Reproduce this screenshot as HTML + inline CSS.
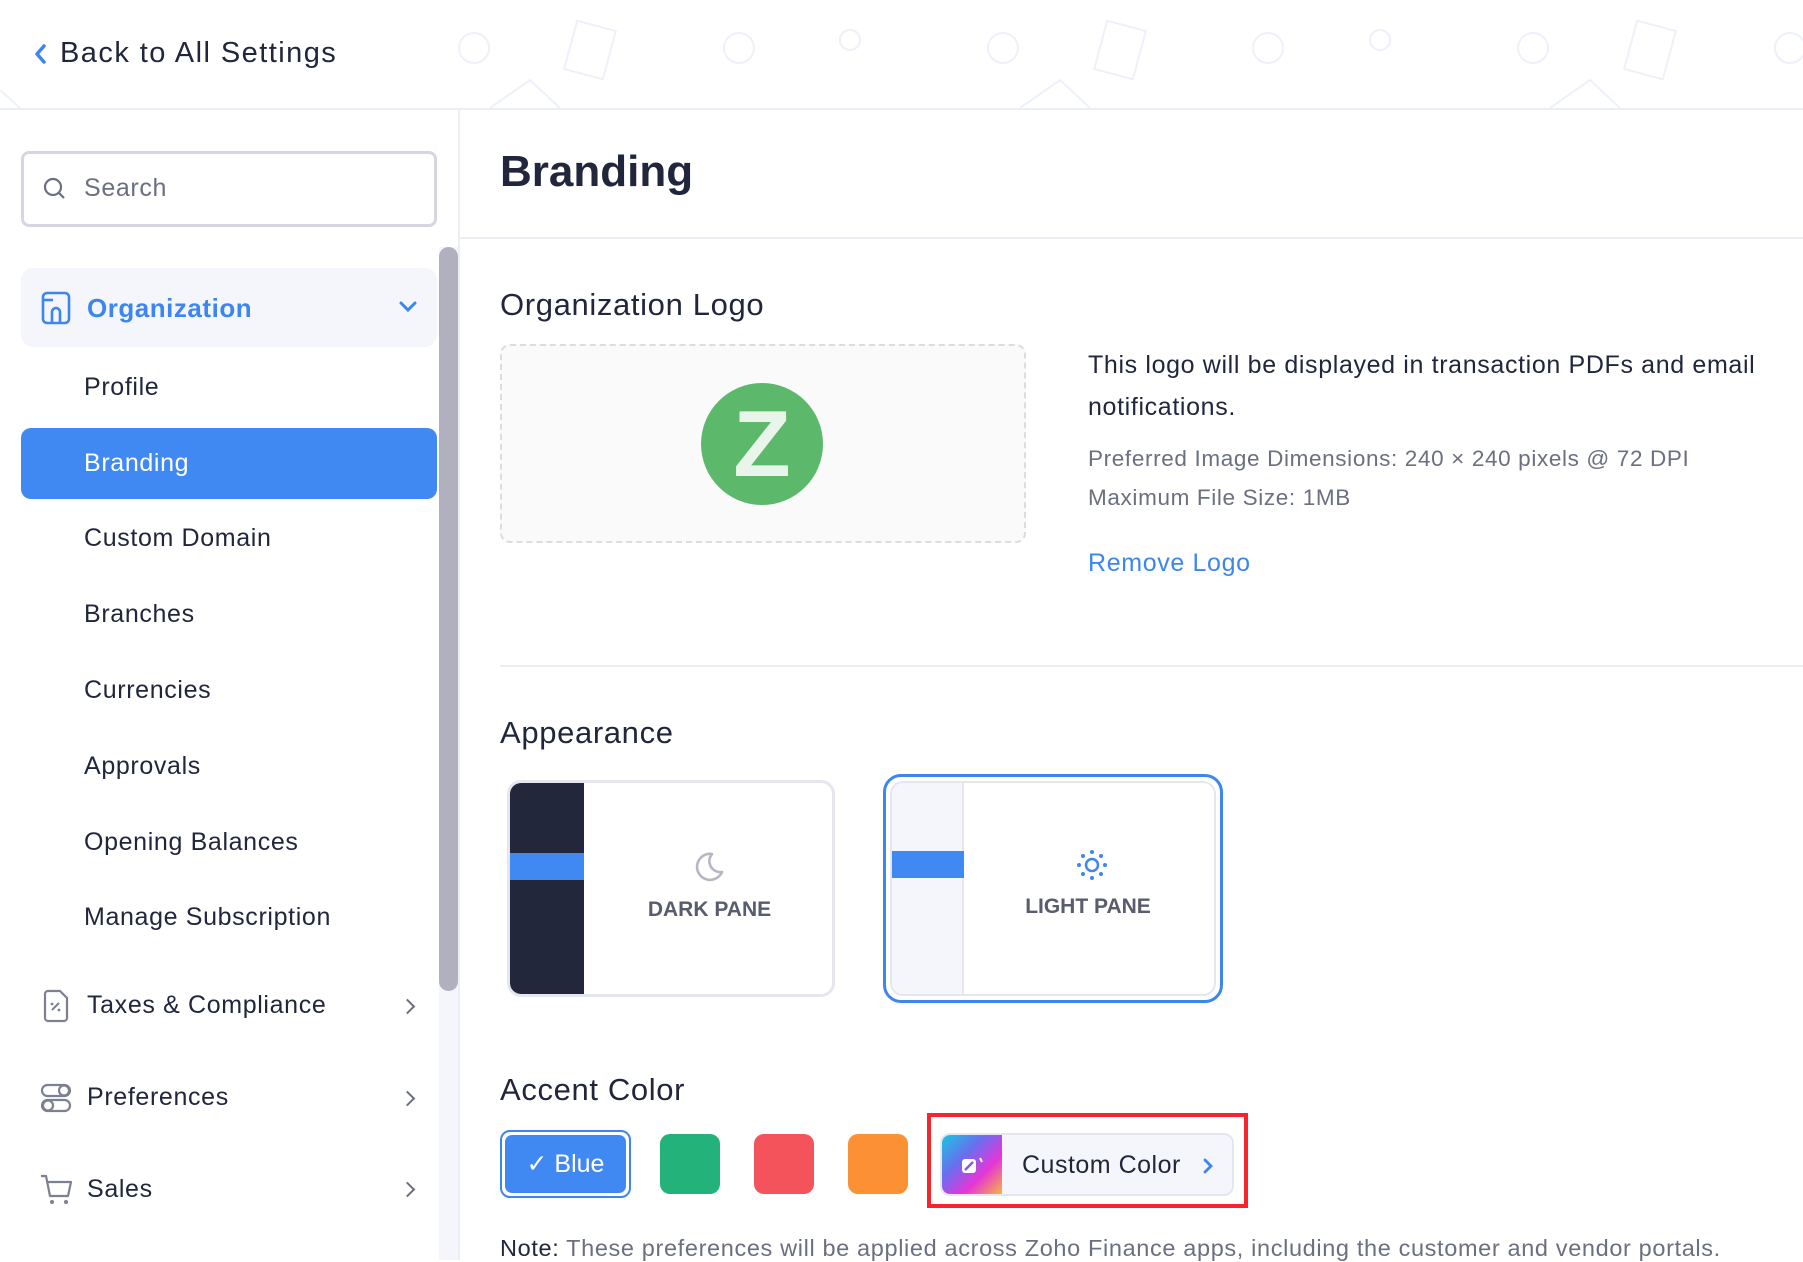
<!DOCTYPE html>
<html><head><meta charset="utf-8"><style>
*{box-sizing:border-box;margin:0;padding:0}
body{width:1803px;height:1260px;overflow:hidden;background:#fff;font-family:"Liberation Sans",sans-serif;color:#21263c;position:relative;letter-spacing:0.04em}
.a{position:absolute;white-space:nowrap}
.nav{font-size:25px;color:#21263c}
.chev{position:absolute;left:402px;width:11px;height:11px;border-right:2.5px solid #6b6f80;border-top:2.5px solid #6b6f80;transform:rotate(45deg)}
</style></head><body>
<svg class="a" style="left:0;top:0" width="1803" height="109">
<g fill="none" stroke="#eef0fa" stroke-width="2">
<circle cx="474" cy="48" r="15"/><circle cx="739" cy="48" r="15"/><circle cx="1003" cy="48" r="15"/><circle cx="1268" cy="48" r="15"/><circle cx="1533" cy="48" r="15"/><circle cx="1790" cy="48" r="15"/>
<rect x="570" y="25" width="40" height="50" transform="rotate(15 590 50)"/><rect x="1100" y="25" width="40" height="50" transform="rotate(15 1120 50)"/><rect x="1630" y="25" width="40" height="50" transform="rotate(15 1650 50)"/>
<circle cx="850" cy="40" r="10"/><circle cx="1380" cy="40" r="10"/>
<path d="M490 108 L530 80 L560 108 M1020 108 L1060 80 L1090 108 M1550 108 L1590 80 L1620 108 M0 90 L20 108"/>
</g></svg>
<div class="a" style="left:0;top:108px;width:1803px;height:2px;background:#eceef5"></div>
<svg class="a" style="left:33px;top:43px" width="14" height="22"><path d="M11 3 L4 11 L11 19" fill="none" stroke="#3d86f0" stroke-width="3.5" stroke-linecap="round" stroke-linejoin="round"/></svg>
<div class="a" style="left:60px;top:37px;font-size:29px;color:#21263c;letter-spacing:0.05em">Back to All Settings</div>

<div class="a" style="left:458px;top:110px;width:2px;height:1150px;background:#eceef3"></div>
<div class="a" style="left:21px;top:151px;width:416px;height:76px;border:3px solid #d6d6e0;border-radius:8px"></div>
<svg class="a" style="left:42px;top:176px" width="26" height="26"><circle cx="11" cy="11" r="8" fill="none" stroke="#6b6f80" stroke-width="2.2"/><path d="M17 17 L22 22" stroke="#6b6f80" stroke-width="2.2"/></svg>
<div class="a" style="left:84px;top:174px;font-size:25px;color:#6b6f80">Search</div>
<div class="a" style="left:439px;top:247px;width:19px;height:1013px;background:#f5f6fb"></div>
<div class="a" style="left:439px;top:247px;width:19px;height:744px;background:#b0b0be;border-radius:10px"></div>

<div class="a" style="left:21px;top:268px;width:416px;height:79px;background:#f4f6fb;border-radius:12px"></div>
<svg class="a" style="left:40px;top:290px" width="32" height="36"><rect x="3" y="3" width="26" height="30" rx="4" fill="none" stroke="#3d86f0" stroke-width="2.6"/><path d="M12 33 V22 a4 4 0 0 1 8 0 V33" fill="none" stroke="#3d86f0" stroke-width="2.6"/><path d="M3 10 h10" stroke="#3d86f0" stroke-width="2.6"/></svg>
<div class="a" style="left:87px;top:293px;font-size:26px;font-weight:600;color:#3d86f0;letter-spacing:0.02em">Organization</div>
<svg class="a" style="left:398px;top:300px" width="20" height="14"><path d="M3 3 L10 10 L17 3" fill="none" stroke="#3d86f0" stroke-width="3" stroke-linecap="round"/></svg>

<div class="a nav" style="left:84px;top:373px">Profile</div>
<div class="a" style="left:21px;top:428px;width:416px;height:71px;background:#4189f2;border-radius:10px"></div>
<div class="a nav" style="left:84px;top:449px;color:#fff">Branding</div>
<div class="a nav" style="left:84px;top:524px">Custom Domain</div>
<div class="a nav" style="left:84px;top:600px">Branches</div>
<div class="a nav" style="left:84px;top:676px">Currencies</div>
<div class="a nav" style="left:84px;top:752px">Approvals</div>
<div class="a nav" style="left:84px;top:828px">Opening Balances</div>
<div class="a nav" style="left:84px;top:903px">Manage Subscription</div>

<svg class="a" style="left:41px;top:988px" width="30" height="36"><path d="M4 6 a3 3 0 0 1 3-3 h12 l7 7 v20 a3 3 0 0 1 -3 3 h-16 a3 3 0 0 1 -3-3z" fill="none" stroke="#7d8090" stroke-width="2.2"/><path d="M11 22 l7-7" stroke="#7d8090" stroke-width="2"/><circle cx="11" cy="16" r="1.4" fill="#7d8090"/><circle cx="18" cy="22" r="1.4" fill="#7d8090"/></svg>
<div class="a nav" style="left:87px;top:991px">Taxes &amp; Compliance</div>
<div class="chev" style="top:1001px"></div>
<svg class="a" style="left:40px;top:1083px" width="32" height="30"><rect x="2" y="2" width="28" height="11" rx="5.5" fill="none" stroke="#7d8090" stroke-width="2.2"/><rect x="2" y="17" width="28" height="11" rx="5.5" fill="none" stroke="#7d8090" stroke-width="2.2"/><circle cx="24" cy="7.5" r="5" fill="none" stroke="#7d8090" stroke-width="2.2"/><circle cx="8" cy="22.5" r="5" fill="none" stroke="#7d8090" stroke-width="2.2"/></svg>
<div class="a nav" style="left:87px;top:1083px">Preferences</div>
<div class="chev" style="top:1093px"></div>
<svg class="a" style="left:39px;top:1173px" width="34" height="34"><path d="M2 3 h5 l4 20 h18 l3 -14 h-23" fill="none" stroke="#7d8090" stroke-width="2.2" stroke-linejoin="round"/><circle cx="13" cy="29" r="2" fill="#7d8090"/><circle cx="27" cy="29" r="2" fill="#7d8090"/></svg>
<div class="a nav" style="left:87px;top:1175px">Sales</div>
<div class="chev" style="top:1184px"></div>

<div class="a" style="left:500px;top:147px;font-size:44px;font-weight:600;color:#21263c;letter-spacing:0">Branding</div>
<div class="a" style="left:460px;top:237px;width:1343px;height:2px;background:#eceef3"></div>
<div class="a" style="left:500px;top:287px;font-size:31px;color:#21263c">Organization Logo</div>
<div class="a" style="left:500px;top:344px;width:526px;height:199px;border:2px dashed #dcdde3;border-radius:10px;background:#fafafa"></div>
<div class="a" style="left:701px;top:383px;width:122px;height:122px;border-radius:50%;background:#5cb96b"></div>
<div class="a" style="left:701px;top:383px;width:122px;height:122px;text-align:center;line-height:122px;font-size:94px;font-weight:700;color:#e9f5ea;letter-spacing:0">Z</div>
<div class="a" style="left:1088px;top:344px;font-size:25px;color:#21263c;line-height:42px">This logo will be displayed in transaction PDFs and email<br>notifications.</div>
<div class="a" style="left:1088px;top:439px;font-size:22.5px;color:#6b6f80;line-height:39px">Preferred Image Dimensions: 240 × 240 pixels @ 72 DPI<br>Maximum File Size: 1MB</div>
<div class="a" style="left:1088px;top:549px;font-size:25px;color:#3d86f0">Remove Logo</div>
<div class="a" style="left:500px;top:665px;width:1303px;height:2px;background:#eceef3"></div>
<div class="a" style="left:500px;top:715px;font-size:31px;color:#21263c">Appearance</div>

<div class="a" style="left:507px;top:780px;width:328px;height:217px;border:3px solid #e6e7ee;border-radius:14px;overflow:hidden;background:#fff">
 <div class="a" style="left:0;top:0;width:74px;height:217px;background:#22273b"></div>
 <div class="a" style="left:0;top:70px;width:74px;height:27px;background:#4189f2"></div>
 <svg class="a" style="left:180px;top:66px" width="36" height="36"><path d="M22 5 a13 13 0 1 0 10 18 a11 11 0 0 1 -10 -18z" fill="none" stroke="#b6b7c2" stroke-width="2.6" stroke-linejoin="round"/></svg>
 <div class="a" style="left:74px;width:251px;top:115px;text-align:center;font-size:21px;font-weight:600;color:#585c6c;letter-spacing:0">DARK PANE</div>
</div>
<div class="a" style="left:883px;top:774px;width:340px;height:229px;border:3px solid #3d86f0;border-radius:18px;padding:4px">
 <div style="position:relative;width:100%;height:100%;border:2px solid #e6e7ee;border-radius:13px;overflow:hidden">
 <div class="a" style="left:0;top:0;width:72px;height:100%;background:#f5f6fb;border-right:2px solid #e6e7ee"></div>
 <div class="a" style="left:0;top:68px;width:72px;height:27px;background:#4189f2"></div>
 <svg class="a" style="left:184px;top:66px" width="32" height="32"><circle cx="16" cy="16" r="6" fill="none" stroke="#3d86f0" stroke-width="2.5"/><g fill="#3d86f0"><circle cx="16" cy="3" r="2"/><circle cx="16" cy="29" r="2"/><circle cx="3" cy="16" r="2"/><circle cx="29" cy="16" r="2"/><circle cx="7" cy="7" r="2"/><circle cx="25" cy="7" r="2"/><circle cx="7" cy="25" r="2"/><circle cx="25" cy="25" r="2"/></g></svg>
 <div class="a" style="left:72px;width:248px;top:112px;text-align:center;font-size:21px;font-weight:600;color:#585c6c;letter-spacing:0">LIGHT PANE</div>
 </div>
</div>

<div class="a" style="left:500px;top:1072px;font-size:31px;color:#21263c">Accent Color</div>
<div class="a" style="left:500px;top:1130px;width:131px;height:68px;border:2px solid #3d86f0;border-radius:10px;padding:3px"><div style="width:100%;height:100%;background:#4189f2;border-radius:7px;color:#fff;font-size:25px;line-height:58px;text-align:center;letter-spacing:0">✓ Blue</div></div>
<div class="a" style="left:660px;top:1134px;width:60px;height:60px;border-radius:10px;background:#22b27a"></div>
<div class="a" style="left:754px;top:1134px;width:60px;height:60px;border-radius:10px;background:#f5535c"></div>
<div class="a" style="left:848px;top:1134px;width:60px;height:60px;border-radius:10px;background:#fb9034"></div>
<div class="a" style="left:940px;top:1133px;width:294px;height:63px;border:2px solid #e6e7ee;border-radius:10px;background:#f5f6fb;overflow:hidden">
 <div class="a" style="left:0;top:0;width:60px;height:63px;background:linear-gradient(135deg,#18c7e0 0%,#6a6ef0 35%,#e535d8 65%,#f7c331 100%)"></div>
 <svg class="a" style="left:18px;top:21px" width="26" height="20"><rect x="2" y="3" width="14" height="14" rx="3" fill="#fff"/><path d="M5 14 L13 6" stroke="#8a58e8" stroke-width="2.5"/><path d="M20 2 l2 4" stroke="#fff" stroke-width="2"/></svg>
 <div class="a" style="left:80px;top:16px;font-size:25px;color:#21263c;letter-spacing:0.02em">Custom Color</div>
 <svg class="a" style="left:260px;top:22px" width="12" height="18"><path d="M3 3 L9 9 L3 15" fill="none" stroke="#3d86f0" stroke-width="2.8" stroke-linecap="round"/></svg>
</div>
<div class="a" style="left:927px;top:1113px;width:321px;height:95px;border:4px solid #f4262b"></div>
<div class="a" style="left:500px;top:1235px;font-size:23.5px;color:#6b6f80"><span style="color:#21263c">Note:</span> These preferences will be applied across Zoho Finance apps, including the customer and vendor portals.</div>
</body></html>
